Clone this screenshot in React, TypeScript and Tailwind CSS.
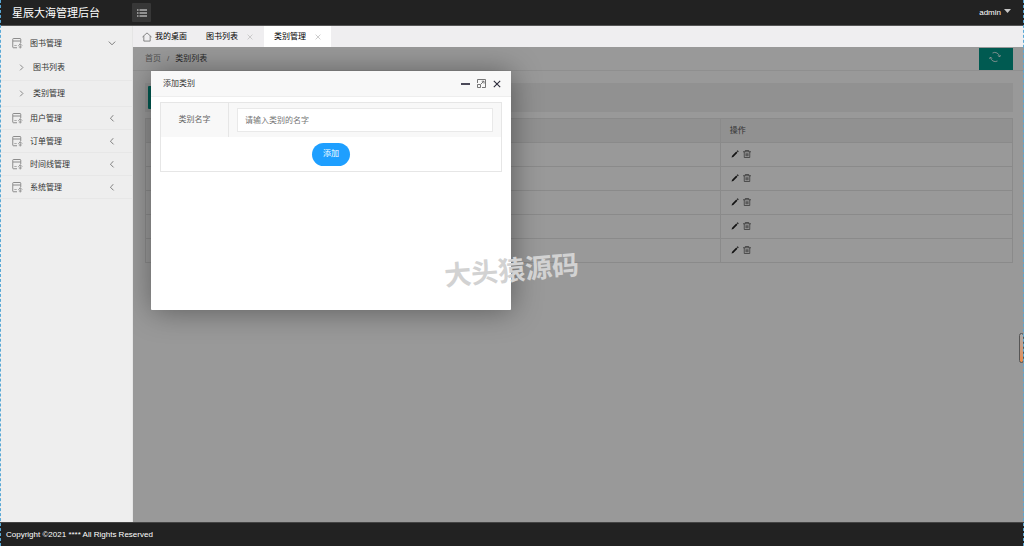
import { useState } from 'react'

const subItems = ['图书列表', '类别管理']
const menus = ['用户管理', '订单管理', '时间线管理', '系统管理']
const rows = [1, 2, 3, 4, 5]

function FormIcon() {
  return (
    <svg className="h-[11px] w-[11px] shrink-0" viewBox="0 0 22 22" fill="none" stroke="#808080" strokeWidth="1.8">
      <path d="M10 19.500H3a1.500 1.500 0 0 1-1.500-1.500V2.500A1.500 1.500 0 0 1 3 1h13a1.500 1.500 0 0 1 1.500 1.500V10" />
      <path d="M2 6h15" />
      <path d="M4.500 15h5" strokeWidth="1.2" />
      <path d="M16.500 11v10M12.500 15.500l4-4 4 4M13.500 18h6" strokeWidth="1.5" />
    </svg>
  )
}

function Chevron({ d, className }: { d: string; className: string }) {
  return (
    <svg className={className} viewBox="0 0 10 10" fill="none" stroke="currentColor" strokeWidth="1.2">
      <path d={d} />
    </svg>
  )
}

function HomeIcon() {
  return (
    <svg className="h-[10px] w-[10px]" viewBox="0 0 22 22" fill="none" stroke="#555" strokeWidth="1.5" strokeLinejoin="round">
      <path d="M1 11L11 2l10 9" />
      <path d="M4 9v11h14V9" />
    </svg>
  )
}

function CloseIcon({ className }: { className: string }) {
  return (
    <svg className={className} viewBox="0 0 10 10" fill="none" stroke="currentColor" strokeWidth="1.4">
      <path d="M1 1l8 8M9 1L1 9" />
    </svg>
  )
}

function RefreshIcon() {
  return (
    <svg className="h-[12px] w-[12px]" viewBox="0 0 24 24" fill="none" stroke="#fff" strokeWidth="1.6">
      <path d="M7 4a9.500 9.500 0 0 1 14 7.500" />
      <path d="M17 20a9.500 9.500 0 0 1-14-7.500" />
      <path d="M18 9l3 3 2.500-3.500M6 15l-3-3-2.500 3.500" />
    </svg>
  )
}

function PencilIcon() {
  return (
    <svg className="h-[8px] w-[8px]" viewBox="0 0 16 16" fill="#222">
      <path d="M1 15l1.200-3.600 8.300-8.300 2.400 2.400-8.300 8.300zM11.500 2.100l1-1q.7-.5 1.300.1l1 1q.6.7.1 1.300l-1 1z" />
    </svg>
  )
}

function TrashIcon() {
  return (
    <svg className="h-[8px] w-[8px]" viewBox="0 0 16 16" fill="none" stroke="#555" strokeWidth="1.5">
      <path d="M0 3.500h16M4.500 3V1h7v2M2.500 3.500V15h11V3.500M6 6.500v6M8 6.500v6M10 6.500v6" />
    </svg>
  )
}

function Sidebar() {
  return (
    <nav className="w-[133px] shrink-0 border-r border-[#e5e5e5] bg-[#eee] pt-1.5 text-[#333]">
      <a href="#" className="flex h-[23px] items-center pl-3 pr-4">
        <FormIcon />
        <span className="ml-[7px] flex-1">图书管理</span>
        <Chevron d="M1 2l4 4 4-4" className="h-2 w-2 text-[#777]" />
      </a>
      {subItems.map((item) => (
        <a key={item} href="#" className="flex h-[26px] items-center border-b border-[#e7e7e7] pl-[18px]">
          <Chevron d="M3 1l4 4-4 4" className="h-[7px] w-[7px] text-[#777]" />
          <span className="ml-2">{item}</span>
        </a>
      ))}
      {menus.map((item) => (
        <a key={item} href="#" className="flex h-[23px] items-center border-b border-[#e7e7e7] pl-3 pr-4 pt-px">
          <FormIcon />
          <span className="ml-[7px] flex-1">{item}</span>
          <Chevron d="M7 0L3 4l4 4" className="h-2 w-2 text-[#777]" />
        </a>
      ))}
    </nav>
  )
}

function Tabs() {
  return (
    <div className="flex h-[21px] shrink-0 items-stretch bg-[#efeef0] text-black">
      <button className="flex items-center gap-[3px] px-[9px]">
        <HomeIcon />
        我的桌面
      </button>
      <button className="flex items-center gap-[9px] px-[10px]">
        图书列表
        <CloseIcon className="h-[6px] w-[6px] text-[#c4c4c4]" />
      </button>
      <button className="ml-px flex items-center gap-[9px] bg-white px-[10px]">
        类别管理
        <CloseIcon className="h-[6px] w-[6px] text-[#c4c4c4]" />
      </button>
    </div>
  )
}

function CategoryPage() {
  return (
    <div className="h-full bg-white">
      <div className="flex h-6 items-center border-b border-[#eee] pl-3 pr-[11px]">
        <a href="#" className="text-[#888]">首页</a>
        <span className="px-[6px] text-[#888]">/</span>
        <span className="flex-1 text-[#444]">类别列表</span>
        <button aria-label="刷新" className="flex h-[22px] w-[34px] justify-center bg-[#009688] pr-[2px] pt-[3px]">
          <RefreshIcon />
        </button>
      </div>
      <div className="pl-3 pr-[11px] pt-3">
        <div className="mb-[6px] h-[29px] bg-[#f2f2f2] p-[3px]">
          <button aria-label="添加" className="h-[23px] w-[38px] rounded-[1px] bg-[#009688]" />
        </div>
        <table className="w-full table-fixed border-collapse text-left text-[#555]">
          <thead>
            <tr className="h-6 bg-[#f2f2f2]">
              <th className="w-[66.3%] border border-[#e6e6e6]" />
              <th className="border border-[#e6e6e6] px-[9px] font-normal">操作</th>
            </tr>
          </thead>
          <tbody>
            {rows.map((row) => (
              <tr key={row} className="h-6">
                <td className="border border-[#e6e6e6]" />
                <td className="border border-[#e6e6e6] px-[10px]">
                  <div className="flex items-center gap-1 pb-[2px]">
                    <button aria-label="编辑"><PencilIcon /></button>
                    <button aria-label="删除"><TrashIcon /></button>
                  </div>
                </td>
              </tr>
            ))}
          </tbody>
        </table>
      </div>
    </div>
  )
}

function AddDialog() {
  const [name, setName] = useState('')
  return (
    <div
      role="dialog"
      aria-labelledby="dialog-title"
      className="absolute left-[18px] top-6 h-[239px] w-[360px] rounded-[1px] bg-white shadow-[1px_1px_30px_rgba(0,0,0,0.4)]"
    >
      <div className="flex h-[26px] items-center border-b border-[#eee] bg-[#f8f8f8] pl-3 pr-[10px] text-[#333]">
        <h2 id="dialog-title" className="flex-1">添加类别</h2>
        <div className="flex items-center gap-[7px] text-[#2e2d3c]">
          <button aria-label="最小化" className="h-[2px] w-[9px] bg-[#4a4958]" />
          <button aria-label="最大化">
            <svg className="h-[9px] w-[9px]" viewBox="0 0 18 18" fill="none" stroke="#666" strokeWidth="1.8">
              <path d="M1 8V1h16v16h-7M1 11h6v6H1zM8 10l5-5M9.500 4.500H14V9" />
            </svg>
          </button>
          <button aria-label="关闭">
            <CloseIcon className="h-[8px] w-[8px]" />
          </button>
        </div>
      </div>
      <form className="mx-[9px] mt-[5px] border border-[#e6e6e6]" onSubmit={(e) => e.preventDefault()}>
        <div className="flex h-[34px] items-stretch bg-[#f8f8f8]">
          <label htmlFor="name" className="flex w-[68px] items-center justify-center border-r border-[#e6e6e6] text-[#666]">
            类别名字
          </label>
          <div className="flex flex-1 items-center px-2">
            <input
              id="name"
              value={name}
              onChange={(e) => setName(e.target.value)}
              placeholder="请输入类别的名字"
              className="h-6 w-full border border-[#e9e9e9] bg-white px-[7px] outline-none placeholder:text-[#757575]"
            />
          </div>
        </div>
        <div className="flex h-[34px] items-center justify-center">
          <button className="h-[23px] w-[38px] rounded-full bg-[#1e9fff] text-white">添加</button>
        </div>
      </form>
    </div>
  )
}

export default function App() {
  return (
    <div className="relative flex h-screen flex-col overflow-hidden font-['Liberation_Sans','Noto_Sans_CJK_SC',sans-serif] text-[8px] leading-3">
      <header className="flex h-[26px] shrink-0 items-center border-b border-[#555] bg-[#222] pl-3 pr-[13px] text-white">
        <h1 className="w-[120px] text-[11px] leading-4">星辰大海管理后台</h1>
        <button aria-label="菜单" className="flex h-[19px] w-[19px] items-center justify-center rounded-[1px] bg-[#373737]">
          <svg className="h-[8px] w-[10px]" viewBox="0 0 20 16" stroke="#eee" strokeWidth="2">
            <path d="M0 2h3M5 2h15M0 8h3M5 8h15M0 14h3M5 14h15" />
          </svg>
        </button>
        <button className="ml-auto flex items-center gap-[3px]">
          admin
          <svg className="mb-1 h-[4px] w-[7px]" viewBox="0 0 14 8" fill="#c8c8c8">
            <path d="M0 0h14L7 8z" />
          </svg>
        </button>
      </header>
      <div className="flex min-h-0 flex-1">
        <Sidebar />
        <div className="flex min-w-0 flex-1 flex-col">
          <Tabs />
          <main className="relative min-h-0 flex-1 overflow-hidden">
            <CategoryPage />
            <div className="absolute inset-0 bg-black/40" />
            <AddDialog />
            <div className="absolute left-[311px] top-[206px] -rotate-5 font-['Noto_Sans_CJK_SC',sans-serif] text-[27px] font-bold leading-8 text-[#d2d2d2]">
              大头猿源码
            </div>
            <div className="absolute right-0 top-[286px] h-[30px] w-[5px] rounded-sm border border-[#555] bg-linear-to-b from-[#aaa] to-[#e88b4a]" />
          </main>
        </div>
      </div>
      <footer className="flex h-6 shrink-0 items-center border-t border-[#444] bg-[#222] pl-[6px] pt-px text-white">
        Copyright ©2021 **** All Rights Reserved
      </footer>
      <div className="pointer-events-none absolute inset-0 border-x border-dashed border-[#5aa9d6]" />
    </div>
  )
}
